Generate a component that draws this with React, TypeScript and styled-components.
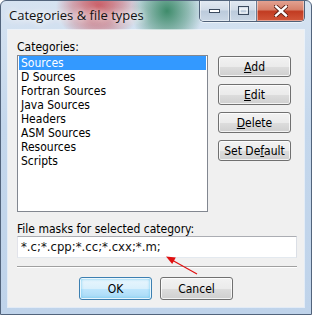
import React from "react";
import styled, { createGlobalStyle, css } from "styled-components";

const GlobalStyle = createGlobalStyle`
  html, body {
    margin: 0;
    padding: 0;
    background: #ffffff;
  }
  body {
    width: 312px;
    height: 315px;
    overflow: hidden;
  }
`;

const Window = styled.div`
  position: relative;
  width: 312px;
  height: 315px;
  box-sizing: border-box;
  border: 1px solid #52647c;
  border-radius: 6px 6px 0 0;
  overflow: hidden;
  display: flex;
  flex-direction: column;
  background:
    radial-gradient(ellipse 42px 36px at 97px 6px, rgba(200, 64, 72, 0.88), rgba(200, 64, 72, 0.4) 60%, rgba(200, 64, 72, 0) 100%),
    radial-gradient(ellipse 36px 38px at 166px 10px, rgba(46, 130, 92, 0.9), rgba(46, 130, 92, 0.4) 60%, rgba(46, 130, 92, 0) 100%),
    linear-gradient(180deg, #d6e3f1 0%, #c4d7ec 40%, #bfd3ea 100%);
  font-family: "DejaVu Sans Condensed", "DejaVu Sans", "Liberation Sans", sans-serif;
  font-stretch: condensed;
  font-size: 12px;
  color: #000;
`;

const TitleBar = styled.div`
  height: 29px;
  display: flex;
  justify-content: space-between;
  align-items: flex-start;
`;

const Caption = styled.div`
  padding: 6px 0 0 8px;
  font-family: "Open Sans", "Noto Sans", sans-serif;
  font-stretch: normal;
  font-size: 13px;
  line-height: 17px;
  color: #111;
  text-shadow: 0 0 6px #fff, 0 0 10px rgba(255, 255, 255, 0.9), 0 0 14px rgba(255, 255, 255, 0.7);
`;

const CaptionButtons = styled.div`
  display: flex;
  margin: -1px 6px 0 0;
  height: 21px;
  border: 1px solid #4f6078;
  border-top: none;
  border-radius: 0 0 5px 5px;
  overflow: hidden;
  box-shadow: 0 1px 0 rgba(255, 255, 255, 0.6);
`;

const CaptionButton = styled.div<{ $w: number; $close?: boolean }>`
  width: ${(p) => p.$w}px;
  display: flex;
  align-items: center;
  justify-content: center;
  box-shadow: inset 0 0 0 1px rgba(255, 255, 255, 0.45);
  ${(p) =>
    p.$close
      ? css`
          background: linear-gradient(180deg, #e4a595 0%, #d7826c 45%, #c23c22 55%, #d2573a 100%);
        `
      : css`
          background: linear-gradient(180deg, #e3eaf3 0%, #d2dce8 45%, #bccbdc 55%, #cad7e5 100%);
          border-right: 1px solid #6a7b92;
        `}
`;

const Client = styled.div`
  flex: 1;
  margin: 0 7px 7px 7px;
  background: #f0f0f0;
  box-shadow: 0 0 0 1px rgba(255, 255, 255, 0.55);
  padding: 10px 7px 7px 9px;
  display: flex;
  flex-direction: column;
`;

const FieldLabel = styled.div<{ $top?: number }>`
  height: 14px;
  line-height: 14px;
  margin-top: ${(p) => p.$top ?? 0}px;
  white-space: nowrap;
`;

const TopRow = styled.div`
  display: flex;
  gap: 10px;
  margin-top: 1px;
  align-items: flex-start;
`;

const ListBox = styled.div`
  width: 191px;
  height: 157px;
  box-sizing: border-box;
  border: 1px solid #828790;
  background: #fff;
  padding: 0 1px;
`;

const ListItem = styled.div<{ $selected?: boolean }>`
  height: 14px;
  line-height: 14px;
  padding-left: 2px;
  white-space: nowrap;
  ${(p) =>
    p.$selected &&
    css`
      background: #3399ff;
      color: #fff;
    `}
`;

const ButtonColumn = styled.div`
  display: flex;
  flex-direction: column;
  gap: 7px;
  margin-top: 1px;
`;

const PushButton = styled.div<{ $h?: number; $default?: boolean }>`
  width: 73px;
  height: ${(p) => p.$h ?? 21}px;
  box-sizing: border-box;
  border: 1px solid #707070;
  border-radius: 3px;
  display: flex;
  align-items: center;
  justify-content: center;
  white-space: nowrap;
  box-shadow: inset 0 0 0 1px rgba(255, 255, 255, 0.75);
  background: linear-gradient(180deg, #f2f2f2 0%, #ebebeb 50%, #dddddd 51%, #cfcfcf 100%);
  ${(p) =>
    p.$default &&
    css`
      border-color: #3c7fb1;
      box-shadow: inset 0 0 0 1px rgba(255, 255, 255, 0.8), inset 0 0 3px 1px #6ec8f0;
      background: linear-gradient(180deg, #eaf6fd 0%, #d9f0fc 50%, #bee6fd 51%, #a7d9f5 100%);
    `}
`;

const Key = styled.span`
  text-decoration: underline;
  text-underline-offset: 1px;
`;

const MaskInput = styled.div`
  height: 22px;
  width: 280px;
  box-sizing: border-box;
  border: 1px solid #abadb3;
  border-color: #abadb3 #dbdfe6 #e3e9ef #e2e3ea;
  background: #fff;
  padding-left: 3px;
  font-size: 13px;
  line-height: 20px;
  color: #111;
  white-space: nowrap;
`;

const Separator = styled.div`
  width: 280px;
  margin-top: 8px;
  border-top: 1px solid #a0a0a0;
  border-bottom: 1px solid #ffffff;
`;

const Footer = styled.div`
  display: flex;
  justify-content: center;
  gap: 8px;
  margin-top: 9px;
  padding-right: 2px;
`;

const Annotation = styled.svg`
  position: absolute;
  left: -1px;
  top: -1px;
  width: 312px;
  height: 315px;
  pointer-events: none;
`;

const categories = [
  "Sources",
  "D Sources",
  "Fortran Sources",
  "Java Sources",
  "Headers",
  "ASM Sources",
  "Resources",
  "Scripts",
];

const MinimizeGlyph = () => (
  <svg width="11" height="6" viewBox="0 0 11 6">
    <rect x="0.5" y="1.5" width="10" height="3" fill="#fff" stroke="#3b4a5e" />
  </svg>
);

const MaximizeGlyph = () => (
  <svg width="11" height="9" viewBox="0 0 11 9">
    <rect x="0.5" y="0.5" width="10" height="8" fill="none" stroke="#3b4a5e" />
    <rect x="2" y="3" width="7" height="4" fill="none" stroke="#fff" />
  </svg>
);

const CloseGlyph = () => (
  <svg width="14" height="12" viewBox="0 0 14 12">
    <path d="M2 1.5 L12 10.5 M12 1.5 L2 10.5" stroke="#5a1f14" strokeWidth="4.2" strokeLinecap="square" />
    <path d="M2 1.5 L12 10.5 M12 1.5 L2 10.5" stroke="#fff" strokeWidth="2.4" strokeLinecap="square" />
  </svg>
);

export default function App() {
  return (
    <>
      <GlobalStyle />
      <Window>
        <TitleBar>
          <Caption>Categories &amp; file types</Caption>
          <CaptionButtons>
            <CaptionButton $w={29}>
              <MinimizeGlyph />
            </CaptionButton>
            <CaptionButton $w={26}>
              <MaximizeGlyph />
            </CaptionButton>
            <CaptionButton $w={47} $close>
              <CloseGlyph />
            </CaptionButton>
          </CaptionButtons>
        </TitleBar>
        <Client>
          <FieldLabel>Categories:</FieldLabel>
          <TopRow>
            <ListBox>
              {categories.map((c, i) => (
                <ListItem key={c} $selected={i === 0}>
                  {c}
                </ListItem>
              ))}
            </ListBox>
            <ButtonColumn>
              <PushButton>
                <Key>A</Key>dd
              </PushButton>
              <PushButton>
                <Key>E</Key>dit
              </PushButton>
              <PushButton>
                <Key>D</Key>elete
              </PushButton>
              <PushButton>
                Set De<Key>f</Key>ault
              </PushButton>
            </ButtonColumn>
          </TopRow>
          <FieldLabel $top={10}>File masks for selected category:</FieldLabel>
          <MaskInput>*.c;*.cpp;*.cc;*.cxx;*.m;</MaskInput>
          <Separator />
          <Footer>
            <PushButton $h={23} $default>
              OK
            </PushButton>
            <PushButton $h={23}>Cancel</PushButton>
          </Footer>
        </Client>
        <Annotation viewBox="0 0 312 315">
          <line x1="197" y1="274" x2="171" y2="259.5" stroke="#e01010" strokeWidth="1.2" />
          <polygon points="166,256.5 175.8,257.6 172.2,264" fill="#e01010" />
        </Annotation>
      </Window>
    </>
  );
}
